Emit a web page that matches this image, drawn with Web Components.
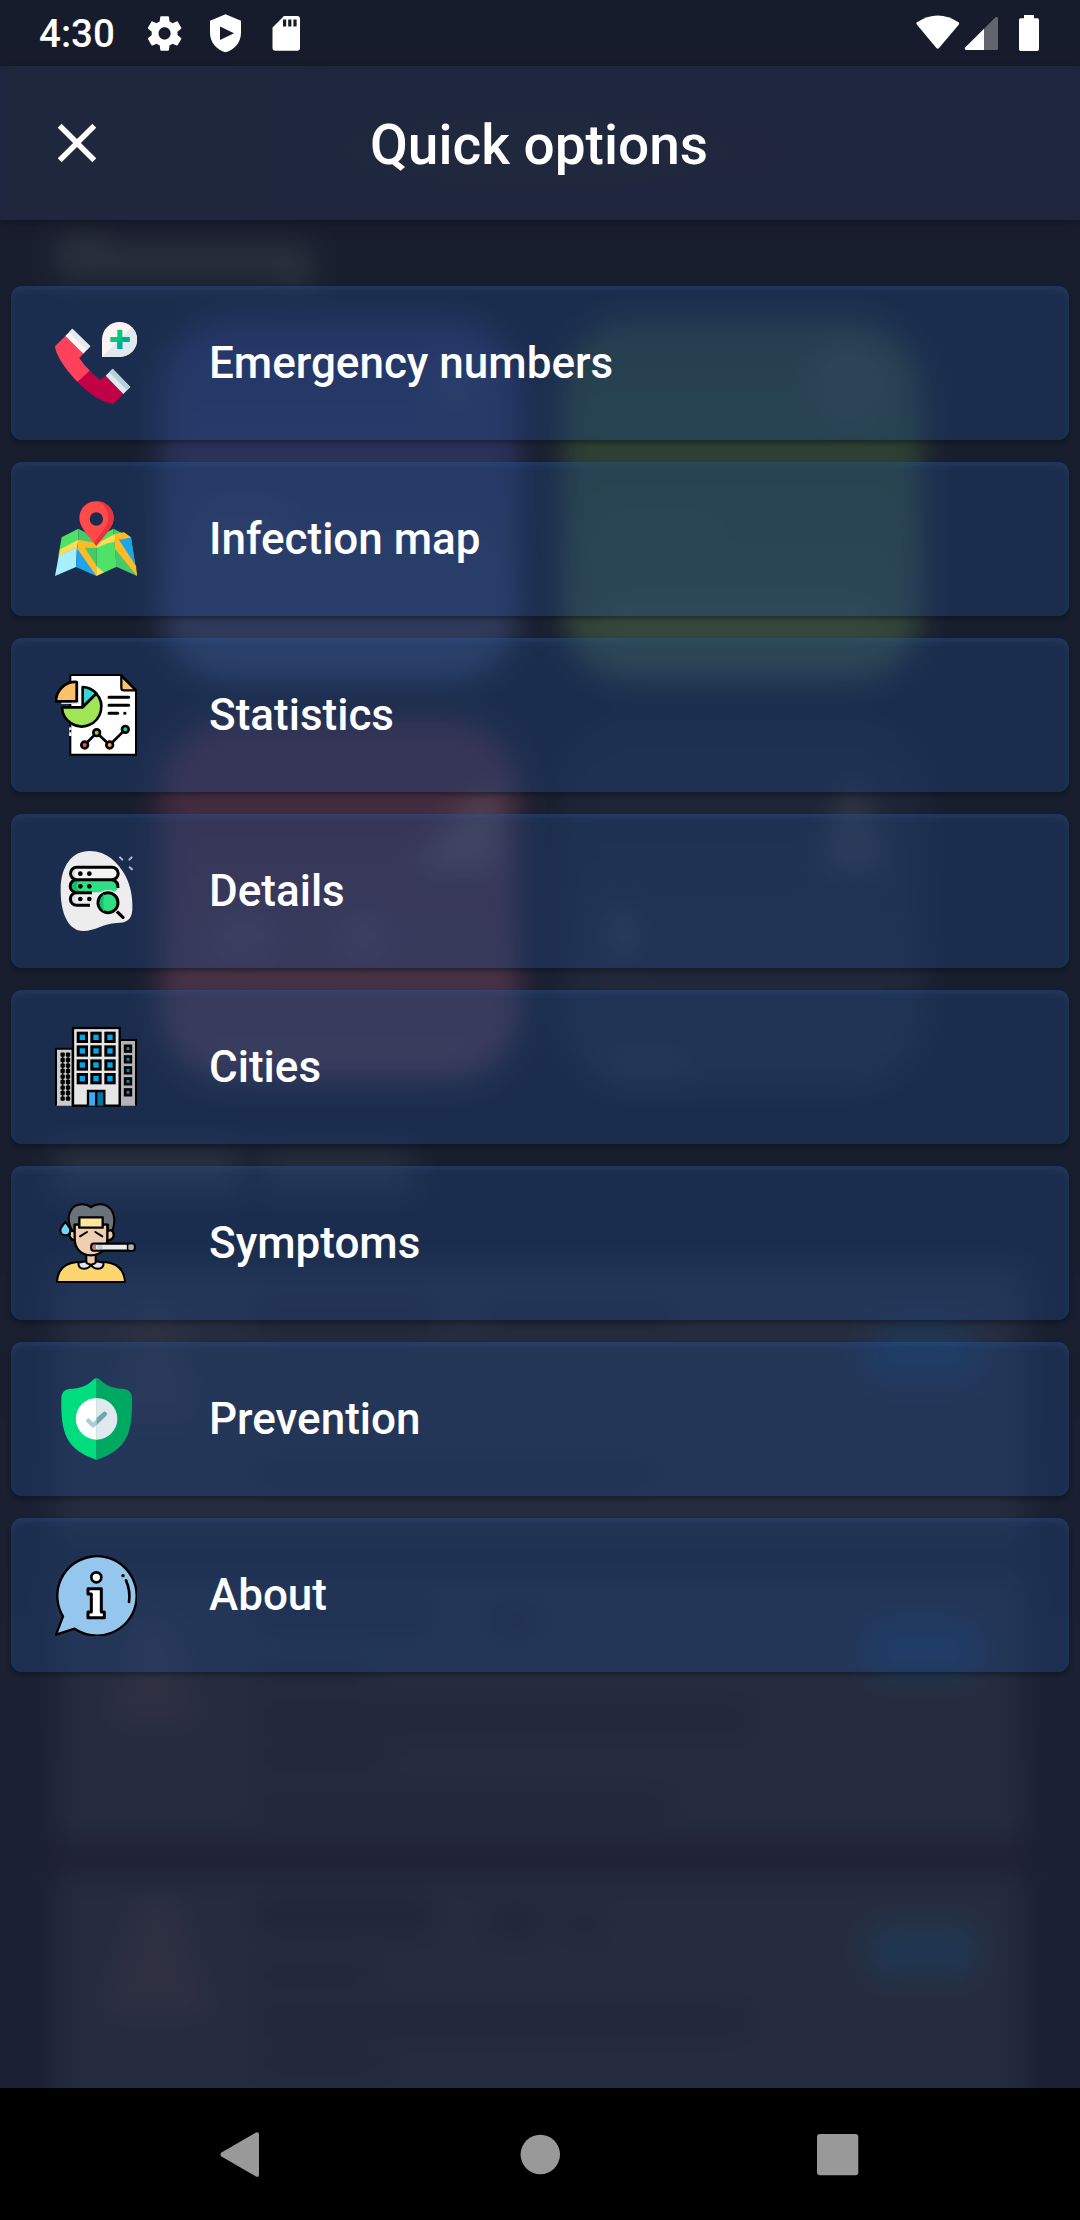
<!DOCTYPE html>
<html lang="en">
<head>
<meta charset="utf-8">
<title>Quick options</title>
<style>
html,body{margin:0;padding:0;background:#191e2f}
body{width:1080px;height:2220px;overflow:hidden;font-family:Roboto,"Liberation Sans",sans-serif;color:#fff}
</style>
</head>
<body>
<quick-screen>
  <option-row icon="phone">Emergency numbers</option-row>
  <option-row icon="map">Infection map</option-row>
  <option-row icon="stats">Statistics</option-row>
  <option-row icon="details">Details</option-row>
  <option-row icon="cities">Cities</option-row>
  <option-row icon="symptoms">Symptoms</option-row>
  <option-row icon="shield">Prevention</option-row>
  <option-row icon="about">About</option-row>
</quick-screen>
<script>
const define = (name, html) => customElements.define(name, class extends HTMLElement {
  constructor() {
    super();
    this.attachShadow({ mode: 'open' }).innerHTML = html;
  }
});

/* Summary page, blurred behind the menu */
define('blurred-page', `
<style>:host{display:block}svg{display:block}</style>
<svg width="1080" height="2220" viewBox="0 0 1080 2220">
  <defs>
    <filter id="b" filterUnits="userSpaceOnUse" x="-60" y="-60" width="1200" height="2340" color-interpolation-filters="sRGB"><feGaussianBlur stdDeviation="14"/></filter>
    <linearGradient id="page" x1="0" y1="0" x2="0" y2="1"><stop offset="0" stop-color="#191e2f"/><stop offset=".55" stop-color="#191e2f"/><stop offset=".8" stop-color="#1b2033"/><stop offset="1" stop-color="#1b2033"/></linearGradient>
    <linearGradient id="blue" x1="0" y1="0" x2="0" y2="1"><stop offset="0" stop-color="#292c57"/><stop offset=".35" stop-color="#2b3157"/><stop offset=".85" stop-color="#2f3a5a"/><stop offset="1" stop-color="#323f5e"/></linearGradient>
    <linearGradient id="green" x1="0" y1="0" x2="0" y2="1"><stop offset="0" stop-color="#293a32"/><stop offset=".35" stop-color="#2c4033"/><stop offset="1" stop-color="#34463c"/></linearGradient>
    <linearGradient id="red" x1="0" y1="0" x2="0" y2="1"><stop offset="0" stop-color="#432a3c"/><stop offset=".3" stop-color="#432c3f"/><stop offset="1" stop-color="#483648"/></linearGradient>
    <linearGradient id="grey" x1="0" y1="0" x2="0" y2="1"><stop offset="0" stop-color="#1d2234"/><stop offset="1" stop-color="#23293c"/></linearGradient>
  </defs>
  <g filter="url(#b)">
    <rect x="-60" y="-60" width="1200" height="2340" fill="url(#page)"/>
    <path d="M56 234H110V244H312V290H285V278H56Z" fill="#2b303d"/>
    <rect x="160" y="320" width="360" height="360" rx="72" fill="url(#blue)"/>
    <rect x="562" y="320" width="360" height="360" rx="72" fill="url(#green)"/>
    <rect x="160" y="720" width="360" height="360" rx="72" fill="url(#red)"/>
    <rect x="562" y="724" width="360" height="360" rx="72" fill="url(#grey)"/>
    <circle cx="455" cy="385" r="28" fill="#2f385b"/>
    <circle cx="850" cy="385" r="42" fill="#33433f"/>
    <rect x="205" y="500" width="80" height="50" fill="#31395a"/>
    <rect x="605" y="515" width="110" height="46" fill="#32473c"/>
    <rect x="605" y="600" width="270" height="28" fill="#394b40"/>
    <path d="M818 872L838 800Q853 768 868 800L890 872Z" fill="#313543"/>
    <path d="M410 872L458 812L500 780L498 872Z" fill="#514350"/>
    <rect x="608" y="912" width="30" height="44" fill="#303649"/>
    <rect x="605" y="1056" width="80" height="24" fill="#2b3042"/>
    <rect x="215" y="915" width="56" height="40" fill="#4a3c4e"/>
    <rect x="340" y="915" width="46" height="40" fill="#4a3c4e"/>
    <rect x="56" y="1148" width="184" height="44" fill="#2b303d"/>
    <rect x="262" y="1152" width="150" height="38" fill="#282e3b"/>
    <rect x="56" y="1270" width="968" height="640" fill="#1e2233"/>
    <rect x="56" y="1270" width="968" height="267" rx="8" fill="#262c3f"/>
    <rect x="56" y="1576" width="968" height="264" rx="8" fill="#252c3f"/>
    <rect x="56" y="1876" width="968" height="400" rx="8" fill="#252c3f"/>
    <path d="M134 1310h42l24 110h-92z M134 1620h42l20 100h-84z M140 1900h34l34 112h-104z" fill="#2e3041"/>
    <rect x="868" y="1325" width="110" height="52" rx="20" fill="#1f3755"/>
    <rect x="868" y="1625" width="110" height="52" rx="20" fill="#1f3755"/>
    <rect x="868" y="1924" width="110" height="52" rx="20" fill="#203751"/>
    <g fill="#202336">
      <rect x="256" y="1304" width="176" height="28"/><rect x="490" y="1308" width="180" height="20"/>
      <rect x="256" y="1466" width="400" height="16"/>
      <rect x="256" y="1602" width="176" height="28"/><rect x="490" y="1608" width="50" height="24"/>
      <rect x="256" y="1666" width="116" height="14"/><rect x="256" y="1710" width="490" height="18"/><rect x="256" y="1752" width="130" height="14"/><rect x="256" y="1798" width="410" height="16"/>
      <rect x="256" y="1902" width="176" height="28"/><rect x="490" y="1910" width="50" height="24"/><rect x="572" y="1914" width="26" height="20"/>
      <rect x="256" y="1968" width="116" height="14"/><rect x="256" y="2012" width="490" height="18"/><rect x="256" y="2056" width="130" height="14"/>
    </g>
  </g>
</svg>`);

define('status-bar', `
<style>
:host{display:flex;align-items:flex-start;justify-content:space-between;height:66px;background:#171c2d;box-sizing:border-box}
.l{display:flex;align-items:flex-start}
.t{font:500 38.5px/66px Roboto,sans-serif;padding-left:39px;width:104px;white-space:nowrap;position:relative;top:1px}
svg{display:block}
</style>
<div class="l"><span class="t">4:30</span>
<svg width="170" height="66" viewBox="143 0 170 66" fill="#fff">
  <path transform="translate(143.9 12.7) scale(1.725)" d="M19.43 12.98c.04-.32.07-.64.07-.98s-.03-.66-.07-.98l2.11-1.65c.19-.15.24-.42.12-.64l-2-3.46c-.12-.22-.39-.3-.61-.22l-2.49 1c-.52-.4-1.08-.73-1.69-.98l-.38-2.65C14.46 2.18 14.25 2 14 2h-4c-.25 0-.46.18-.49.42l-.38 2.65c-.61.25-1.17.59-1.69.98l-2.49-1c-.23-.09-.49 0-.61.22l-2 3.46c-.13.22-.07.49.12.64l2.11 1.65c-.04.32-.07.65-.07.98s.03.66.07.98l-2.11 1.65c-.19.15-.24.42-.12.64l2 3.46c.12.22.39.3.61.22l2.49-1c.52.4 1.08.73 1.69.98l.38 2.65c.03.24.24.42.49.42h4c.25 0 .46-.18.49-.42l.38-2.65c.61-.25 1.17-.59 1.69-.98l2.49 1c.23.09.49 0 .61-.22l2-3.46c.12-.22.07-.49-.12-.64l-2.11-1.65zM12 15.5c-1.93 0-3.5-1.57-3.5-3.5s1.57-3.5 3.5-3.5 3.5 1.57 3.5 3.5-1.57 3.5-3.5 3.5z"/>
  <path fill-rule="evenodd" d="M225.5 14.3L241 20.8V33C241 42 234.500 50 225.500 52.300C216.500 50 210 42 210 33V20.800ZM220 26.500V40L234 33.300Z"/>
  <path fill-rule="evenodd" d="M284 16H297Q300 16 300 19V48Q300 50.700 297 50.700H275.500Q272.500 50.700 272.500 48V27.500ZM283 19.600V26.600H286.200V19.600ZM288.200 19.600V26.600H291.400V19.600ZM293.400 19.600V26.600H296.600V19.600Z"/>
</svg></div>
<svg width="170" height="66" viewBox="910 0 170 66" fill="#fff">
  <path d="M916.500 22.500Q937.700 8.500 959 22.500Q959.500 23.500 958.500 25L939 48Q937.700 49.400 936.400 48L917.200 25Q916 23.500 916.500 22.500Z"/>
  <path d="M984 28.700L965.200 47.600Q963.800 50 966.500 50H984Z"/>
  <path d="M984 28.700L995.500 17.300Q998 16.200 998 18.500V48.500Q998 50 996.500 50H984Z" opacity=".32"/>
  <path d="M1024 15H1034V18.300H1037.500Q1039 18.300 1039 20V49.200Q1039 51 1037.300 51H1020.700Q1019 51 1019 49.200V20Q1019 18.300 1020.500 18.300H1024Z"/>
</svg>`);

define('title-bar', `
<style>
:host{display:grid;grid-template-columns:154px 1fr 154px;align-items:center;height:154px;background:radial-gradient(ellipse 250px 46px at 540px 84px,#20283d 0,#20283d 60%,transparent),linear-gradient(90deg,#1e263f 0,#1e273c 14px,#1e273c 220px,#1e263e 340px,#1e253e);box-shadow:0 2px 12px rgba(14,18,28,.7)}
svg{display:block;margin-left:44px}
h1{margin:0;font:500 55px/154px Roboto,sans-serif;text-align:center;white-space:nowrap;position:relative;left:-1px;top:2px}
</style>
<svg width="66" height="66" viewBox="0 0 24 24" fill="#fff"><path d="M19 6.410L17.590 5 12 10.590 6.410 5 5 6.410 10.590 12 5 17.590 6.410 19 12 13.410 17.590 19 19 17.590 13.410 12z"/></svg>
<h1><slot></slot></h1>`);

define('nav-bar', `
<style>:host{display:flex;justify-content:center;height:132px;background:#000}svg{display:block}</style>
<svg width="1080" height="132" viewBox="0 2088 1080 132" fill="#999">
  <path d="M221.500 2152.500L256 2132.500Q259 2131.500 259 2134.500V2174.500Q259 2177.800 256 2176.600L221.500 2156.600Q219.500 2154.500 221.500 2152.500Z"/>
  <circle cx="540.300" cy="2154.500" r="19.700"/>
  <rect x="817" y="2134" width="41.300" height="41.300" rx="3"/>
</svg>`);

const K = 'stroke="#000" stroke-linejoin="round" stroke-linecap="round"';
const rects = (xs, ys, w, extra) => ys.map(y => xs.map(x => `<rect x="${x - w / 2}" y="${y - w / 2}" width="${w}" height="${w}" ${extra}/>`).join('')).join('');

const ICONS = {
phone: ['165 126 246 246', `
  <path d="M196 168L250 221L238 234Q252 256 270 272L233 306C190 262 167 222 165 199Z" fill="#ff415b"/>
  <path d="M233 306L270 272Q288 291 301 299L317 287L370 342L340 372C306 368 262 338 233 306Z" fill="#c10046"/>
  <path d="M217 146L271 199L250 221L196 168Z" fill="#fff3f3"/><path d="M217 146L271 199L261 210L207 157Z" fill="#e0e9ef"/>
  <path d="M338 266L391 321L370 342L317 287Z" fill="#e0e9ef"/><path d="M338 266L391 321L381 331L328 276Z" fill="#b6d0d7"/>
  <path d="M306 231V178A52.500 52.500 0 1 1 359 231Z" fill="#fff3f3"/><path d="M306 231L396 141A52.500 52.500 0 0 1 359 231Z" fill="#e0e9ef"/>
  <path d="M352 149H367V171H389V186H367V207H352V186H331V171H352Z" fill="#00cc76"/><path d="M389 171V186H367V207H352V186L367 171Z" fill="#00ab97"/>`],
map: ['165 654 246 246', `
  <path d="M185 772L235 746V782L175 828Z" fill="#4ee366"/><path d="M235 746L289 775V800L235 790Z" fill="#47c969"/>
  <path d="M289 775L340 746L350 860L289 888Z" fill="#4ee366"/><path d="M340 746L393 772L411 888L349 860Z" fill="#47c969"/>
  <path d="M240 800L289 800V866Z" fill="#47c969"/>
  <path d="M181 808L235 779L232 801L176 830Z" fill="#ffdb56"/>
  <path d="M176 829L231 801L228 861L165 888Z" fill="#a7effc"/>
  <path d="M231 801L289 880V888L228 861Z" fill="#1ea4e9"/>
  <path d="M235 779L289 790V804L254 803L289 856V888L232 806Z" fill="#ffbb25"/>
  <path d="M289 792L345 762L348 784L322 790L289 804Z" fill="#ffdb56"/><path d="M289 858L312 877L289 888Z" fill="#ffdb56"/>
  <path d="M344 762L372 757L393 772L367 778Q353 777 345 784Z" fill="#ffbb25"/>
  <path d="M359 780L393 773L405 855L358 793Z" fill="#1ea4e9"/>
  <path d="M343 780L357 780L408 858L411 888L345 806Z" fill="#ffbb25"/>
  <path fill-rule="evenodd" d="M289 664C260 664 238 686 238 714C238 742 266 768 289 798C312 768 341 742 341 714C341 686 318 664 289 664ZM289 697A20 20 0 1 1 289 737A20 20 0 1 1 289 697Z" fill="#ff4a4a"/>
  <path d="M289 664C318 664 341 686 341 714C341 742 312 768 289 798L282 788C304 757 325 738 325 714C325 688 309 667 289 664Z" fill="#e8333f"/>`],
stats: ['165 162 246 246', `
  <path d="M211 165H364L408 210V404H211Z" fill="#fff" ${K} stroke-width="6"/>
  <path d="M211 322V348" stroke="#fff" stroke-width="7"/><path d="M211 332v3" ${K} stroke-width="5"/>
  <path d="M364 168L408 211H372Q364 211 364 203Z" fill="#fdc16c" ${K} stroke-width="7"/>
  <path d="M248 262L289 221A59 59 0 1 1 186 262Z" fill="#a0e557" ${K} stroke-width="8"/>
  <path d="M248 260V201Q272 202 289 220Z" fill="#35d6d4" ${K} stroke-width="8"/>
  <path d="M230 244V186A58 58 0 0 0 168 244Z" fill="#fdc16c" ${K} stroke-width="8"/>
  <path d="M236 186V250H184" fill="none" stroke="#ddd" stroke-width="4"/>
  <path d="M327 232H386M327 256H386M327 280H353M374 280h1" fill="none" ${K} stroke-width="9"/>
  <path d="M254 375L290 338L329 375L376 328" fill="none" ${K} stroke-width="8"/>
  <g ${K} stroke-width="8"><circle cx="254" cy="375" r="10" fill="#ef5157"/><circle cx="290" cy="338" r="10" fill="#86cd45"/><circle cx="329" cy="375" r="10" fill="#f0a94d"/><circle cx="376" cy="328" r="10" fill="#27c9b2"/></g>`],
details: ['165 690 246 246', `
  <path d="M182 810C182 735 218 693 268 693C322 693 355 730 375 765C391 795 399 830 397 870C395 900 378 909 350 909C310 911 285 933 250 933C205 932 182 882 182 810Z" fill="#ededed"/>
  <path d="M360 712L367 719M395 712L388 719M389 742L396 748" stroke="#b3bdd0" stroke-width="6" stroke-linecap="round"/>
  <rect x="212" y="742" width="142" height="37" rx="18" fill="#f3f3f1"/><rect x="212" y="780" width="142" height="37" rx="18" fill="#2fdf84"/>
  <path d="M230 742A18 18 0 0 0 230 779Q218 761 230 742ZM230 818A18 18 0 0 0 230 855Q218 837 230 818Z" fill="#d5dbe3"/>
  <path d="M230 780A18 18 0 0 0 230 817H242Q218 798 242 780Z" fill="#16bd70"/>
  <path d="M230 742H336A18 18 0 0 1 336 779H230A18 18 0 0 1 230 742ZM336 779Q355 783 354 804M230 779A19 19 0 0 0 230 818H276M230 818A19 19 0 0 0 230 856H270" fill="none" stroke="#000" stroke-width="9"/>
  <g fill="#000"><circle cx="241" cy="761" r="7"/><circle cx="268" cy="761" r="7"/><circle cx="241" cy="799" r="7"/><circle cx="268" cy="799" r="7"/><circle cx="241" cy="837" r="7"/><circle cx="268" cy="837" r="7"/></g>
  <path d="M344 868L369 892" ${K} stroke-width="10"/>
  <circle cx="324" cy="848" r="38" fill="#f0f0f0"/><circle cx="324" cy="848" r="30" fill="#2fdf84" stroke="#000" stroke-width="9"/><path d="M312 824Q290 848 312 872Q303 848 312 824Z" fill="#16bd70" stroke="#16bd70" stroke-width="4"/>`],
cities: ['165 168 246 246', `
  <path d="M168 407V236H218V407" fill="#ccc" stroke="#000" stroke-width="6"/>
  <path d="M360 407V210H408V407" fill="#b3b3b3" stroke="#000" stroke-width="6"/>
  <rect x="219" y="174" width="140" height="233" fill="#e6e6e6" stroke="#000" stroke-width="7"/>
  ${rects([188, 204], [254, 270, 287, 303, 320, 336, 353, 369, 386], 13, 'rx="3"')}<path d="M188 250V390M204 250V390" stroke="#000" stroke-width="4"/>
  ${rects([247, 288, 330], [202, 243, 285, 326], 25, 'fill="#00a8e8" stroke="#000" stroke-width="9"')}
  ${rects([384], [236, 268, 301, 334, 367], 17, 'fill="#0086b8" stroke="#000" stroke-width="8"')}
  <rect x="264" y="363" width="24" height="44" fill="#3fa9f5"/><rect x="289" y="363" width="24" height="44" fill="#0075a3"/>
  <path d="M264 407V363H313V407M288.500 363V407" fill="none" stroke="#000" stroke-width="7"/>`],
symptoms: ['165 696 246 246', `
  <path d="M171 936Q174 880 232 876H314Q371 880 375 936Z" fill="#fdd66f" ${K} stroke-width="6"/>
  <path d="M259 854V880Q273 892 287 880V854Z" fill="#efc9a8" ${K} stroke-width="6"/>
  <path d="M235 878Q235 896 252 896Q266 896 273 884Q259 882 257 874ZM311 878Q311 896 294 896Q280 896 273 884Q287 882 289 874Z" fill="#e1e5eb" ${K} stroke-width="6"/>
  <path d="M224 779Q207 778 209 797Q212 812 228 810M322 779Q342 778 341 797Q338 812 320 810" fill="#efc9a8" ${K} stroke-width="7"/>
  <path d="M218 784C192 740 212 703 247 703Q262 703 273 712Q284 703 300 703C337 703 352 742 337 782Q330 778 324 784V764H224V784Z" fill="#6a727b" ${K} stroke-width="6"/>
  <path d="M224 764H322V806C322 838 300 856 273 856C246 856 224 838 224 806Z" fill="#efcfb2" ${K} stroke-width="7"/>
  <rect x="238" y="742" width="70" height="31" fill="#ffe69c" ${K} stroke-width="7"/>
  <path d="M240 799L261 786M286 786L307 799" ${K} stroke-width="6"/>
  <rect x="274" y="821" width="130" height="21" rx="7" fill="#e9ebee" ${K} stroke-width="7"/>
  <path d="M280 824H288V839H280Q275 832 280 824Z" fill="#ed6673"/><path d="M387 824H400V839H387Z" fill="#aab1ba"/><path d="M292 824L308 827V836L292 839Z" fill="#c7cdd6"/><path d="M383 821V842" stroke="#000" stroke-width="5"/>
  <path d="M196 756Q180 775 181 781A15 15 0 0 0 211 781Q211 775 196 756Z" fill="#6fd7f5" ${K} stroke-width="6"/>`],
shield: ['165 174 246 246', `
  <path d="M290 174Q285 174 280 179C262 197 240 205 207 207Q184 211 184 235C182 340 198 388 290 420Z" fill="#00dd7f"/>
  <path d="M290 174Q295 174 300 179C318 197 340 205 373 207Q396 211 396 235C398 340 382 388 290 420Z" fill="#00a962"/>
  <path d="M290 234A62 62 0 0 0 290 359Z" fill="#fff"/><path d="M289.500 234A62 62 0 0 1 289.500 359Z" fill="#e0e9ee"/>
  <path d="M265 302L279 316L290 306" fill="none" stroke="#a9ced5" stroke-width="13" stroke-linecap="round" stroke-linejoin="round"/>
  <path d="M290 294L309 277A7 7 0 0 1 319 287L290 315Z" fill="#6fa7ad"/>`],
about: ['165 702 246 246', `
  <path d="M168 944L189 889A119 119 0 1 1 224 926Z" fill="#94c6ee" ${K} stroke-width="7"/>
  <path d="M378 781Q392 812 387 846" fill="none" ${K} stroke-width="8"/><circle cx="369" cy="767" r="5"/>
  <circle cx="289" cy="772" r="15" fill="#fff" stroke="#000" stroke-width="8"/>
  <path d="M264 806H304V876H313V893H264V876H274V822H264Z" fill="#fff" ${K} stroke-width="9"/>`]
};

customElements.define('option-row', class extends HTMLElement {
  constructor() {
    super();
    const [box, art] = ICONS[this.getAttribute('icon')];
    this.attachShadow({ mode: 'open' }).innerHTML = `
<style>
:host{display:flex;align-items:center;height:154px;box-sizing:border-box;padding-left:44px;border-radius:11px;
  background:rgba(33,74,134,.37);box-shadow:0 3px 5px rgba(8,12,20,.42),inset 0 4px 6px rgba(70,110,175,.16)}
svg{display:block;flex:none;width:82px;height:82px;margin-right:72px}
span{font:500 44px/52px Roboto,sans-serif;white-space:nowrap}
</style>
<svg viewBox="${box}">${art}</svg><span><slot></slot></span>`;
  }
});

define('quick-screen', `
<style>
:host{display:block;position:relative;width:1080px;height:2220px;overflow:hidden}
blurred-page{position:absolute;inset:0}
.ui{position:relative;display:flex;flex-direction:column;height:2220px}
main{flex:1;display:flex;flex-direction:column;gap:22px;padding:66px 11px 0}
</style>
<blurred-page></blurred-page>
<div class="ui">
  <status-bar></status-bar>
  <title-bar>Quick options</title-bar>
  <main><slot></slot></main>
  <nav-bar></nav-bar>
</div>`);
</script>
</body>
</html>
